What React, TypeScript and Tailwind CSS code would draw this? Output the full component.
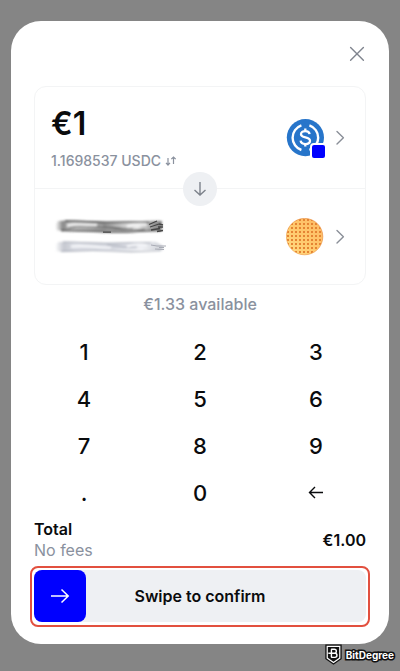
import { useState } from 'react';
import type { ReactNode } from 'react';

const KEYS = ['1', '2', '3', '4', '5', '6', '7', '8', '9', '.', '0', 'back'];

function CloseIcon() {
  return (
    <svg viewBox="0 0 18 18" className="size-[18px]" fill="none" stroke="currentColor" strokeWidth="1.4" strokeLinecap="round">
      <path d="M2.6 2.4 15.4 15.2M15.4 2.4 2.6 15.2" />
    </svg>
  );
}

function ChevronIcon() {
  return (
    <svg viewBox="0 0 20 20" className="size-5 text-[#8a8f98]" fill="none" stroke="currentColor" strokeWidth="1.4" strokeLinecap="round" strokeLinejoin="round">
      <path d="M8 3.600 14.400 9.800 8 16" />
    </svg>
  );
}

function UsdcIcon() {
  return (
    <svg viewBox="0 0 38 38" className="size-[38px]" fill="none">
      <circle cx="19.4" cy="18.6" r="18.6" fill="#2775ca" />
      <path d="M15.4 6.400a13 13 0 0 0 0 24.600M23.400 6.400a13 13 0 0 1 0 24.600" stroke="#fff" strokeWidth="2.400" />
      <path d="M23.600 15.200c-.3-2-1.900-3.100-4.300-3.100-2.600 0-4.300 1.200-4.300 3.100 0 4.300 9 2.100 9 6.600 0 2-1.800 3.300-4.600 3.300-2.700 0-4.500-1.200-4.800-3.400M19.300 9.600v2.500M19.300 25.100v2.500" stroke="#fff" strokeWidth="2.300" />
    </svg>
  );
}

function WaffleIcon() {
  return (
    <svg viewBox="0 0 38 38" className="size-[38px]">
      <defs>
        <linearGradient id="waffle" x1="0" y1="1" x2="1" y2="0">
          <stop offset="0" stopColor="#ffdc85" />
          <stop offset="0.5" stopColor="#ffc86c" />
          <stop offset="1" stopColor="#fdb865" />
        </linearGradient>
        <linearGradient id="crust" x1="0" y1="1" x2="1" y2="0">
          <stop offset="0" stopColor="#f0a040" />
          <stop offset="1" stopColor="#e27a2c" />
        </linearGradient>
        <pattern id="holes" width="4" height="4" patternUnits="userSpaceOnUse">
          <rect x="1" y="1" width="2" height="2" fill="#e58434" />
        </pattern>
      </defs>
      <circle cx="18.600" cy="18.600" r="18.200" fill="url(#waffle)" stroke="url(#crust)" strokeWidth="0.600" />
      <circle cx="18.600" cy="18.600" r="18" fill="url(#holes)" />
    </svg>
  );
}

// Brush strokes that cover the name and amount of the target asset
function HiddenAsset() {
  return (
    <svg viewBox="0 0 120 38" className="w-[120px] h-[38px]" fill="none" role="img" aria-label="Hidden asset">
      <defs>
        <linearGradient id="dark" x1="4" x2="113" y1="0" y2="0" gradientUnits="userSpaceOnUse">
          <stop offset="0" stopColor="#999" stopOpacity="0" />
          <stop offset="0.07" stopColor="#888" />
          <stop offset="0.15" stopColor="#bbb" />
          <stop offset="0.45" stopColor="#999" />
          <stop offset="0.76" stopColor="#eee" />
          <stop offset="0.9" stopColor="#999" />
          <stop offset="1" stopColor="#777" />
        </linearGradient>
        <linearGradient id="light" x1="4" x2="115" y1="0" y2="0" gradientUnits="userSpaceOnUse">
          <stop offset="0" stopColor="#c5c8d0" stopOpacity="0" />
          <stop offset="0.08" stopColor="#c5c8d0" />
          <stop offset="0.18" stopColor="#dcdee5" />
          <stop offset="0.5" stopColor="#d3d6de" />
          <stop offset="0.78" stopColor="#f0f1f5" />
          <stop offset="1" stopColor="#c8cbd2" />
        </linearGradient>
        <filter id="soft" x="-5%" y="-40%" width="110%" height="180%">
          <feGaussianBlur stdDeviation="0.8" />
        </filter>
        <filter id="sharp" x="-5%" y="-40%" width="110%" height="180%">
          <feGaussianBlur stdDeviation="0.4" />
        </filter>
      </defs>
      <g filter="url(#soft)">
        <path d="M7 3C28 1.500 50 4 72 3.500s26-1 39-.5v10c-20-1-34 1.500-51 .5S26 12.500 6 12.500c-2-3-2-6 1-9.500Z" fill="url(#dark)" />
        <path d="M14 3c18 0 26 1.500 44 1.500s20-.5 40 0M10 12.500c18-.5 26 1 50 1.500s30-2 50-1.500" stroke="#444" strokeWidth="1.500" />
        <path d="M18 10c16-5 30 0 44 1s20 1.500 32 0M52 8c12 1 18 4 30 3" stroke="#666" strokeWidth="1.200" />
        <path d="M16 7.500c12-2 20-.5 30-.5M76 8.500c8-3 14-3 20-2" stroke="#f2f2f2" strokeWidth="2.600" />
      </g>
      <path d="M98 6.500l8-3.500M99 9l9-3M100 12l9-1.500M107 9h5M106 13.500l6-1M108 6l4 1M52 14.200h8" stroke="#444" strokeWidth="1.300" filter="url(#sharp)" />
      <g filter="url(#soft)">
        <path d="M7 24c21-1 43 1 65 .5s24-1 33-.5l7 4v4c-18 0-35 1-52 .5S26 33.500 6 33.500c-2-3-2-6 1-9.500Z" fill="url(#light)" />
        <path d="M12 24c18 0 28 1.500 46 1.500s24-1 42-.5M10 33.500c18-.5 26-2 50-.5s30 .5 50-.5M56 27c12 1 18 3 30 2" stroke="#a9adb8" strokeWidth="1.100" />
        <path d="M20 28.500c12-2 26 1 40 1M76 28.500c8-3 14-3 20-1" stroke="#f7f8fb" strokeWidth="2" />
      </g>
      <path d="M100 27l6 1h9M104 31l9 .5M108 29.500h5" stroke="#a8abb4" strokeWidth="1" filter="url(#sharp)" />
    </svg>
  );
}

function AssetButton({ label, children }: { label: string; children: ReactNode }) {
  return (
    <button type="button" aria-label={label} className="flex items-center gap-[5px]">
      {children}
      <ChevronIcon />
    </button>
  );
}

function Watermark() {
  return (
    <div className="absolute right-1.5 bottom-1.5 flex items-center gap-1">
      <svg viewBox="0 0 18 22" className="w-[17px] h-[21px]" fill="none">
        <path d="M1 1h16v14.500L9 21 1 15.500Z" fill="#fff" stroke="#111" strokeWidth="1.400" />
        <path d="M3 3h12v11.500L9 18.800 3 14.500Z" fill="#111" />
        <path d="M6.500 5.500h3.400a2 2 0 0 1 0 4.200H3.500M6.500 9.700h4a2.100 2.100 0 0 1 0 4.300h-4M6.800 5.500V14" stroke="#fff" strokeWidth="1.500" />
      </svg>
      <span className="text-[10px] leading-4 font-bold text-white [-webkit-text-stroke:3px_#111] [paint-order:stroke_fill]">BitDegree</span>
    </div>
  );
}

export default function App() {
  const [amount, setAmount] = useState('1');

  const press = (key: string) => {
    if (key === 'back') {
      setAmount(amount.slice(0, -1) || '0');
    } else {
      setAmount(amount === '0' ? key : amount + key);
    }
  };

  return (
    <div className="relative min-h-screen bg-[#858585] px-[11px] pt-[21px] pb-[27px] font-['Inter',sans-serif] text-[#0a0b0d]">
      <main className="rounded-[30px] bg-white px-[23px] pb-[17px]">
        <header className="flex h-[65px] items-center justify-end">
          <button type="button" aria-label="Close" className="text-[#80858f]">
            <CloseIcon />
          </button>
        </header>

        <section className="relative rounded-xl border border-[#f3f4f5]">
          <div className="flex h-[102px] items-center justify-between border-b border-[#f3f4f5] px-4">
            <div className="flex flex-col gap-[7px]">
              <div className="text-[32px] leading-10 font-semibold">€{amount}</div>
              <button type="button" className="flex items-center gap-1 text-[14px] leading-5 font-medium text-[#8a919e]">
                1.1698537 USDC
                <svg viewBox="0 0 12 12" className="size-3" fill="none" stroke="currentColor" strokeWidth="1.200">
                  <path d="M3 3v7M1 7.800l2 2.200 2-2.200M8.500 9V2M6.300 4.200 8.500 2l2.200 2.200" />
                </svg>
              </button>
            </div>
            <AssetButton label="Select USDC">
              <span className="relative">
                <UsdcIcon />
                <span className="absolute -right-[3px] -bottom-[3px] size-[17px] rounded-sm border-2 border-white bg-[#0000ff]" />
              </span>
            </AssetButton>
          </div>
          <div className="flex h-[95px] items-center justify-between px-4">
            <HiddenAsset />
            <AssetButton label="Select target asset">
              <WaffleIcon />
            </AssetButton>
          </div>
          <button type="button" aria-label="Switch direction" className="absolute top-[85px] left-1/2 flex size-[34px] -translate-x-1/2 items-center justify-center rounded-full bg-[#eef0f3] text-[#7d828b]">
            <svg viewBox="0 0 16 16" className="size-4" fill="none" stroke="currentColor" strokeWidth="1.400">
              <path d="M8 1v13M2.500 9 8 14l5.500-5" />
            </svg>
          </button>
        </section>

        <p className="pt-[7px] pb-3 text-center text-[16px] leading-6 font-medium text-[#8a919e]">€1.33 available</p>

        <div className="-mx-2 grid grid-cols-3">
          {KEYS.map((key) => (
            <button key={key} type="button" onClick={() => press(key)} className="flex h-[47px] items-center justify-center text-[22px] leading-7 font-medium">
              {key === 'back' ? (
                <svg viewBox="0 0 16 16" className="size-4" fill="none" stroke="currentColor" strokeWidth="1.400" role="img" aria-label="Delete">
                  <path d="M15 7.500H1.800M7 2 1.500 7.500 7 13" />
                </svg>
              ) : (
                key
              )}
            </button>
          ))}
        </div>

        <div className="flex items-center justify-between pt-[3px] text-[16px] leading-[21px]">
          <div>
            <div className="font-semibold">Total</div>
            <div className="text-[#8a919e]">No fees</div>
          </div>
          <div className="font-semibold">€1.00</div>
        </div>

        <div className="-mx-1 mt-[5px] rounded-lg border-2 border-[#e2503f] p-0.5 pb-[3px]">
          <div className="relative flex h-[52px] items-center justify-center rounded-lg bg-[#eef0f3]">
            <button type="button" aria-label="Swipe" className="absolute top-0 left-0 flex size-[52px] items-center justify-center rounded-lg bg-[#0000ff] text-white">
              <svg viewBox="0 0 20 20" className="size-5" fill="none" stroke="currentColor" strokeWidth="1.500">
                <path d="M1 10h17M11.500 3.500 18.200 10l-6.700 6.500" />
              </svg>
            </button>
            <span className="text-[16px] leading-6 font-semibold">Swipe to confirm</span>
          </div>
        </div>
      </main>
      <Watermark />
    </div>
  );
}
